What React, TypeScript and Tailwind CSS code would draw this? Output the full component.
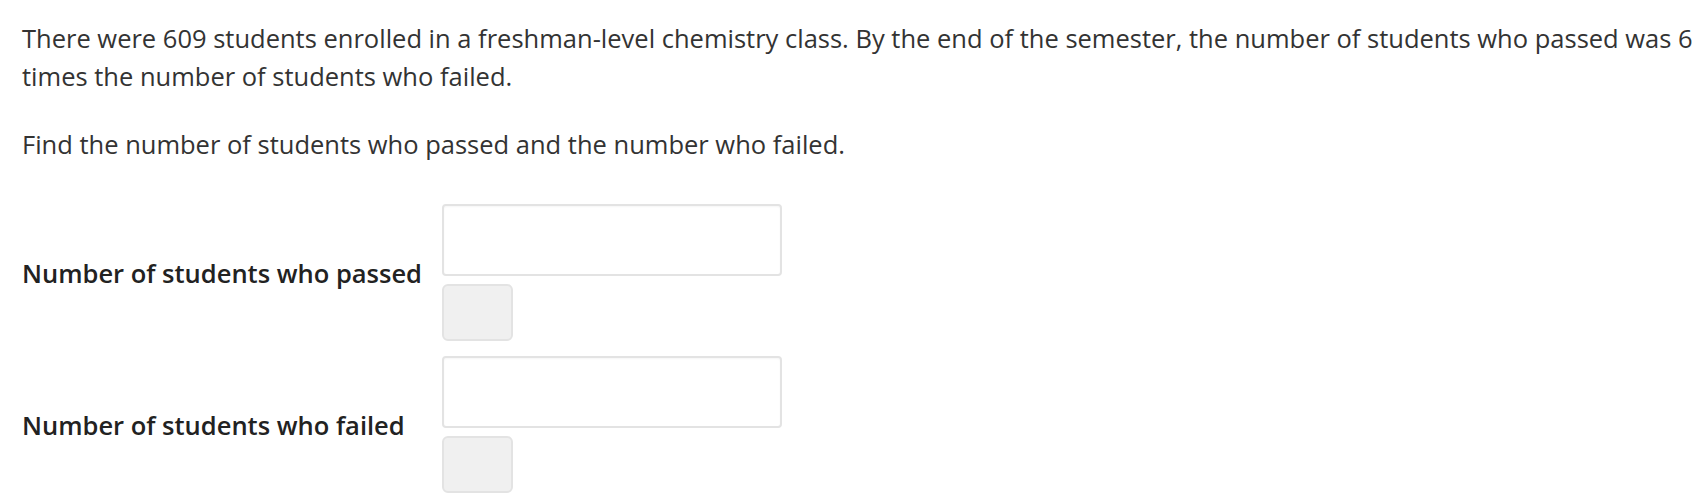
export default function App() {
  const fields = ['Number of students who passed', 'Number of students who failed'];

  return (
    <div className="min-h-[500px] w-[1702px] bg-white pl-[22px] pr-[4px] pt-[19px] font-['Open_Sans',sans-serif] text-[25.5px] leading-[38px] text-[#333]">
      <p>
        There were 609 students enrolled in a freshman-level chemistry class. By the end of the semester, the number of
        students who passed was 6 times the number of students who failed.
      </p>
      <p className="mt-[30px]">Find the number of students who passed and the number who failed.</p>

      <div className="mt-[41px] flex flex-col gap-[15px]">
        {fields.map((label) => (
          <div key={label} className="flex items-center">
            <div className="w-[420px] shrink-0 font-semibold text-[#222]">{label}</div>
            <div className="flex flex-col gap-[8px]">
              <div className="h-[72px] w-[340px] rounded-[4px] border-2 border-[#e3e3e3] bg-white shadow-[inset_0_1px_2px_rgba(0,0,0,0.04)]" />
              <div className="h-[57px] w-[71px] rounded-[6px] border-2 border-[#e3e3e3] bg-[#f0f0f0]" />
            </div>
          </div>
        ))}
      </div>
    </div>
  );
}
